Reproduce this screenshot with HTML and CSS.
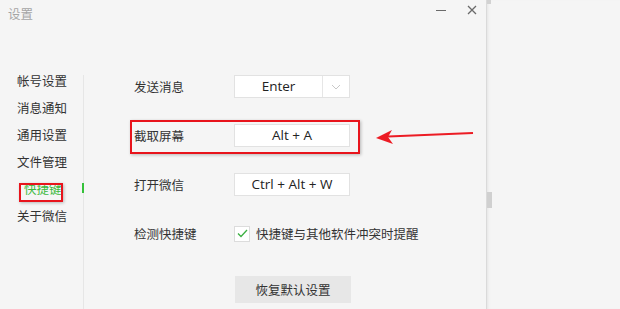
FILE: index.html
```html
<!DOCTYPE html>
<html lang="zh-CN">
<head>
    <meta charset="UTF-8">
    <title>设置</title>
    <link rel="stylesheet" href="styles.css">
</head>
<body>
    <div class="screen">
        <div class="window">
            <div class="titlebar">
                <span class="title">设置</span>
                <div class="controls">
                    <span class="btn-min"></span>
                    <svg class="btn-close" width="10" height="10" viewBox="0 0 10 10">
                        <path d="M1 1 L9 9 M9 1 L1 9" stroke="#6a6a6a" stroke-width="1.3" fill="none"/>
                    </svg>
                </div>
            </div>

            <div class="main">
                <ul class="nav">
                    <li>帐号设置</li>
                    <li>消息通知</li>
                    <li>通用设置</li>
                    <li>文件管理</li>
                    <li class="active">快捷键</li>
                    <li>关于微信</li>
                </ul>
                <div class="divider">
                    <span class="indicator"></span>
                </div>

                <div class="content">
                    <div class="row">
                        <span class="label">发送消息</span>
                        <div class="combo">
                            <span class="combo-value">Enter</span>
                            <span class="combo-arrow">
                                <svg width="10" height="6" viewBox="0 0 10 6">
                                    <path d="M1 1 L5 5 L9 1" stroke="#c8c8c8" stroke-width="1" fill="none"/>
                                </svg>
                            </span>
                        </div>
                    </div>
                    <div class="row">
                        <span class="label">截取屏幕</span>
                        <div class="key">Alt + A</div>
                    </div>
                    <div class="row">
                        <span class="label">打开微信</span>
                        <div class="key">Ctrl + Alt + W</div>
                    </div>
                    <div class="row">
                        <span class="label">检测快捷键</span>
                        <label class="check">
                            <span class="box">
                                <svg width="11" height="9" viewBox="0 0 11 9">
                                    <path d="M1 4.5 L4 7.5 L10 1" stroke="#3cb043" stroke-width="1.3" fill="none"/>
                                </svg>
                            </span>
                            快捷键与其他软件冲突时提醒
                        </label>
                    </div>
                    <div class="row row-btn">
                        <button class="restore">恢复默认设置</button>
                    </div>
                </div>
            </div>
        </div>

        <div class="side">
            <span class="thumb-top"></span>
            <span class="thumb"></span>
        </div>

        <!-- annotations drawn over the screenshot -->
        <div class="mark mark-nav"></div>
        <div class="mark mark-row"></div>
        <svg class="arrow" width="100" height="16" viewBox="0 0 100 16">
            <path d="M97 4 L12 7.5" stroke="#ec1c24" stroke-width="2" fill="none"/>
            <path d="M0 9 L16 1 L12 8 L17 15 Z" fill="#ec1c24"/>
        </svg>
    </div>
</body>
</html>
```

FILE: styles.css
```css
body {
    margin: 0;
    background: #f5f5f5;
    font-family: "Noto Sans CJK SC", "Noto Sans", sans-serif;
    font-size: 12.5px;
    color: #333;
}

.screen {
    position: relative;
    display: flex;
    width: 620px;
    height: 309px;
    overflow: hidden;
}

.window {
    width: 486px;
    display: flex;
    flex-direction: column;
    background: #f5f5f5;
}

.titlebar {
    height: 67px;
    display: flex;
    justify-content: space-between;
    align-items: flex-start;
}

.title {
    margin: 5px 0 0 8px;
    color: #a5a5a5;
    line-height: 18px;
}

.controls {
    display: flex;
    align-items: center;
    gap: 21px;
    margin: 5px 9px 0 0;
    height: 10px;
}

.btn-min {
    width: 10px;
    height: 1px;
    background: #6a6a6a;
}

.btn-close {
    display: block;
}

.main {
    flex: 1;
    display: flex;
}

.nav {
    list-style: none;
    margin: 0;
    padding: 0 0 0 17px;
    width: 66px;
}

.nav li {
    height: 27px;
    line-height: 27px;
    white-space: nowrap;
}

.nav li.active {
    padding-left: 7px;
    color: #3cb93c;
}

.divider {
    position: relative;
    width: 1px;
    margin-top: 8px;
    background: #e6e6e6;
}

.indicator {
    position: absolute;
    left: -1px;
    top: 108px;
    width: 2px;
    height: 10px;
    background: #35c13a;
}

.content {
    flex: 1;
    padding: 8px 0 0 50px;
    display: flex;
    flex-direction: column;
    gap: 26px;
}

.row {
    display: flex;
    align-items: center;
    height: 23px;
}

.label {
    width: 100px;
}

.combo,
.key {
    width: 114px;
    height: 21px;
    background: #fff;
    border: 1px solid #e2e2e2;
    font-family: "Open Sans", "Noto Sans", sans-serif;
    font-size: 13.5px;
    color: #222;
}

.combo {
    display: flex;
}

.combo-value {
    flex: 1;
    text-align: center;
    line-height: 21px;
}

.combo-arrow {
    width: 26px;
    border-left: 1px solid #e6e6e6;
    display: flex;
    align-items: center;
    justify-content: center;
}

.key {
    text-align: center;
    line-height: 21px;
}

.check {
    display: flex;
    align-items: center;
    gap: 6px;
    white-space: nowrap;
}

.box {
    width: 14px;
    height: 14px;
    background: #fff;
    border: 1px solid #dcdcdc;
    display: flex;
    align-items: center;
    justify-content: center;
}

.row-btn {
    margin-top: 5px;
    height: 27px;
}

.restore {
    margin-left: 101px;
    width: 116px;
    height: 27px;
    border: none;
    background: #e7e7e7;
    color: #333;
    font-family: "Noto Sans CJK SC", sans-serif;
    font-size: 12.5px;
    padding: 0;
}

.side {
    position: relative;
    flex: 1;
    border-left: 1px solid #dadada;
    box-shadow: inset 3px 0 3px -2px #e4e4e4;
}

.thumb-top {
    position: absolute;
    left: 0;
    top: 0;
    width: 4px;
    height: 4px;
    background: #d2d2d2;
}

.thumb {
    position: absolute;
    left: 0;
    top: 192px;
    width: 5px;
    height: 16px;
    background: #d0d0d0;
}

.mark {
    position: absolute;
    border: 2px solid #e8141c;
    box-shadow: 1px 1px 3px rgba(0, 0, 0, 0.25);
}

.mark-nav {
    left: 19px;
    top: 183px;
    width: 40px;
    height: 15px;
}

.mark-row {
    left: 130px;
    top: 120px;
    width: 226px;
    height: 30px;
}

.arrow {
    position: absolute;
    left: 376px;
    top: 129px;
}
```
